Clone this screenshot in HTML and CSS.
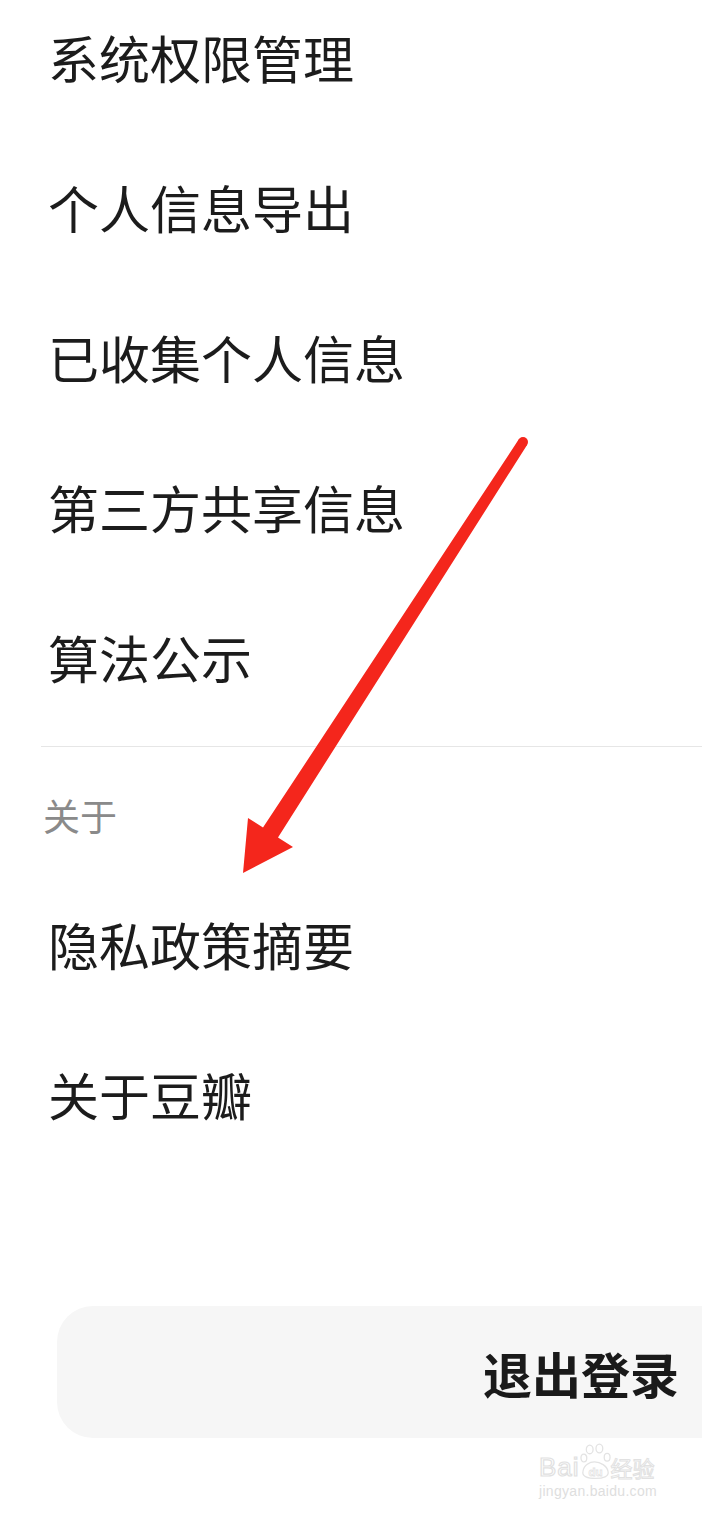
FILE: index.html
```html
<!DOCTYPE html>
<html>
    <head>
        <meta charset="utf-8">
        <title>设置</title>
        <link rel="stylesheet" href="styles.css">
    </head>
    <body>
        <div class="page">
            <ul class="menu first">
                <li>系统权限管理</li>
                <li>个人信息导出</li>
                <li>已收集个人信息</li>
                <li>第三方共享信息</li>
                <li>算法公示</li>
            </ul>
            <div class="divider"></div>
            <div class="section-title">关于</div>
            <ul class="menu">
                <li>隐私政策摘要</li>
                <li>关于豆瓣</li>
            </ul>
            <div class="logout">退出登录</div>

            <svg class="arrow" width="702" height="1519" viewBox="0 0 702 1519">
                <circle cx="523" cy="442" r="5" fill="#f4261c"/>
                <polygon fill="#f4261c" points="518.8,439.3 263,827.6 248,818 243,873 293,847 278,837.4 527.2,444.7"/>
            </svg>

            <div class="watermark">
                <div class="wm-top">
                    <span class="wm-bai">Bai</span>
                    <span class="wm-paw">
                        <svg width="31" height="37" viewBox="0 0 32 37">
                            <ellipse cx="10" cy="6" rx="3.5" ry="4.5" fill="none" stroke="#e3e3e3" stroke-width="1.3"/>
                            <ellipse cx="20" cy="5" rx="3.5" ry="4.5" fill="none" stroke="#e3e3e3" stroke-width="1.3"/>
                            <ellipse cx="4" cy="15" rx="3" ry="4" fill="none" stroke="#e3e3e3" stroke-width="1.3"/>
                            <ellipse cx="28" cy="14" rx="3" ry="4" fill="none" stroke="#e3e3e3" stroke-width="1.3"/>
                            <path d="M3 29 C4 22 10 19 15 19 C21 19 28 23 29 29 C30 34 24 36 16 36 C8 36 2 34 3 29 Z" fill="none" stroke="#e3e3e3" stroke-width="1.3"/>
                            <text x="16" y="33" text-anchor="middle" font-family="Liberation Sans, sans-serif" font-size="12" font-weight="bold" fill="#fff" stroke="#e3e3e3" stroke-width="0.8">du</text>
                        </svg>
                    </span>
                    <span class="wm-jy">经验</span>
                </div>
                <div class="wm-url">jingyan.baidu.com</div>
            </div>
        </div>
    </body>
</html>
```

FILE: styles.css
```css
body {
    margin: 0;
    background: #ffffff;
    overflow: hidden;
}
.page {
    position: relative;
    width: 702px;
    height: 1519px;
    overflow: hidden;
    font-family: "Noto Sans CJK SC", "Noto Sans", sans-serif;
    color: #1c1c1c;
}
.menu {
    list-style: none;
    margin: 0;
    padding: 0 0 0 48px;
}
.menu.first {
    margin-top: -18px;
}
.menu li {
    height: 150px;
    line-height: 150px;
    font-size: 51px;
    white-space: nowrap;
}
.divider {
    margin-top: 14px;
    margin-left: 41px;
    height: 1px;
    background: #e6e6e6;
}
.section-title {
    padding: 50px 0 35px 43px;
    font-size: 37px;
    line-height: 37px;
    color: #8a8a8a;
}
.logout {
    margin-top: 137px;
    margin-left: 57px;
    margin-right: -40px;
    height: 132px;
    border-radius: 36px;
    background: #f6f6f6;
    display: flex;
    align-items: center;
    justify-content: flex-end;
    padding-right: 63px;
    font-size: 49px;
    font-weight: bold;
    color: #1a1a1a;
}
.arrow {
    position: absolute;
    left: 0;
    top: 0;
    pointer-events: none;
}
.watermark {
    position: absolute;
    left: 539px;
    top: 1442px;
    width: 130px;
    font-family: "Liberation Sans", sans-serif;
}
.wm-top {
    display: flex;
    align-items: flex-end;
    height: 38px;
}
.wm-bai {
    font-size: 26px;
    line-height: 24px;
    letter-spacing: 1px;
    color: #fff;
    -webkit-text-stroke: 1.2px #e1e1e1;
    margin-bottom: 1px;
}
.wm-paw svg {
    display: block;
}
.wm-jy {
    font-family: "Noto Sans CJK SC", sans-serif;
    font-size: 22px;
    line-height: 26px;
    color: #fff;
    -webkit-text-stroke: 1px #e1e1e1;
}
.wm-url {
    font-size: 14px;
    line-height: 16px;
    margin-top: 3px;
    letter-spacing: 0.3px;
    color: #dedede;
}
```
